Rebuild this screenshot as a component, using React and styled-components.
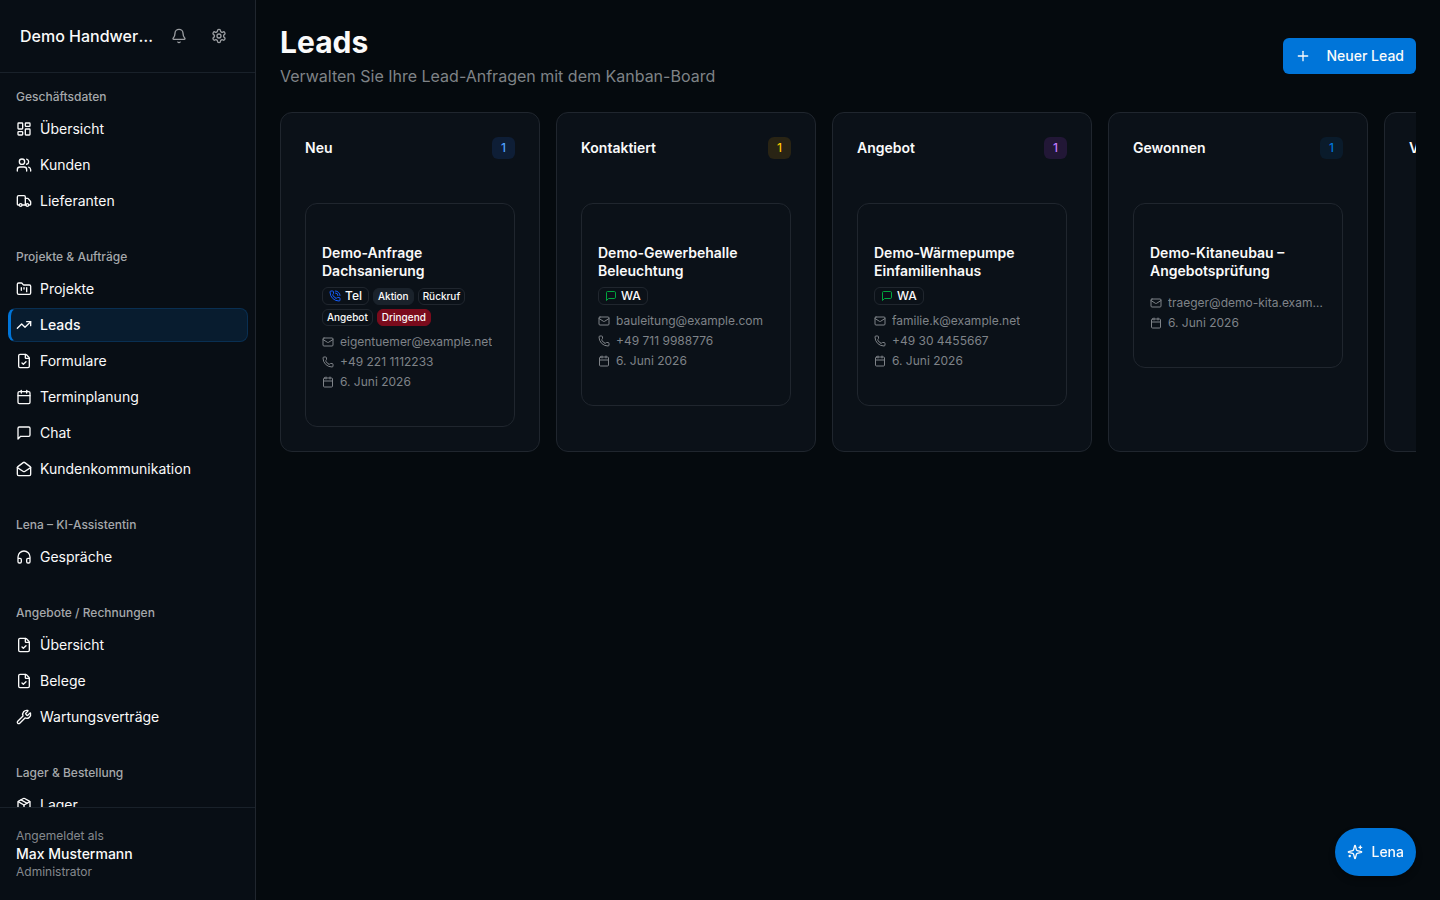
import React from 'react'
import styled, { createGlobalStyle } from 'styled-components'
import {
  LayoutDashboard, Users, Truck, FolderKanban, TrendingUp, FileCheck, Calendar,
  MailOpen, Headphones, Wrench, Package, Bell, Plus, Mail, Phone, PhoneCall
} from 'lucide-react'

const LineIcon = ({ size = 16, children }) => (
  <svg width={size} height={size} viewBox="0 0 24 24" fill="none" stroke="currentColor"
    strokeWidth="2" strokeLinecap="round" strokeLinejoin="round" aria-hidden="true">
    {children}
  </svg>
)

const ChatIcon = ({ size }) => (
  <LineIcon size={size}>
    <path d="M21 15a2 2 0 0 1-2 2H7l-4 4V5a2 2 0 0 1 2-2h14a2 2 0 0 1 2 2z" />
  </LineIcon>
)

const GearIcon = ({ size }) => (
  <LineIcon size={size}>
    <path d="M12.22 2h-.44a2 2 0 0 0-2 2v.18a2 2 0 0 1-1 1.73l-.43.25a2 2 0 0 1-2 0l-.15-.08a2 2 0 0 0-2.73.73l-.22.38a2 2 0 0 0 .73 2.73l.15.1a2 2 0 0 1 1 1.72v.51a2 2 0 0 1-1 1.74l-.15.09a2 2 0 0 0-.73 2.73l.22.38a2 2 0 0 0 2.73.73l.15-.08a2 2 0 0 1 2 0l.43.25a2 2 0 0 1 1 1.73V20a2 2 0 0 0 2 2h.44a2 2 0 0 0 2-2v-.18a2 2 0 0 1 1-1.73l.43-.25a2 2 0 0 1 2 0l.15.08a2 2 0 0 0 2.73-.73l.22-.39a2 2 0 0 0-.73-2.73l-.15-.08a2 2 0 0 1-1-1.74v-.5a2 2 0 0 1 1-1.74l.15-.09a2 2 0 0 0 .73-2.73l-.22-.38a2 2 0 0 0-2.73-.73l-.15.08a2 2 0 0 1-2 0l-.43-.25a2 2 0 0 1-1-1.73V4a2 2 0 0 0-2-2z" />
    <circle cx="12" cy="12" r="3" />
  </LineIcon>
)

const SparklesIcon = ({ size }) => (
  <LineIcon size={size}>
    <path d="M9.937 15.5A2 2 0 0 0 8.5 14.063l-6.135-1.582a.5.5 0 0 1 0-.962L8.5 9.936A2 2 0 0 0 9.937 8.5l1.582-6.135a.5.5 0 0 1 .963 0L14.063 8.5A2 2 0 0 0 15.5 9.937l6.135 1.581a.5.5 0 0 1 0 .964L15.5 14.063a2 2 0 0 0-1.437 1.437l-1.582 6.135a.5.5 0 0 1-.963 0z" />
    <path d="M20 3v4" />
    <path d="M22 5h-4" />
    <path d="M4 17v2" />
    <path d="M5 18H3" />
  </LineIcon>
)

const navGroups = [
  {
    label: 'Geschäftsdaten',
    items: [
      { name: 'Übersicht', icon: LayoutDashboard },
      { name: 'Kunden', icon: Users },
      { name: 'Lieferanten', icon: Truck },
    ],
  },
  {
    label: 'Projekte & Aufträge',
    items: [
      { name: 'Projekte', icon: FolderKanban },
      { name: 'Leads', icon: TrendingUp, active: true },
      { name: 'Formulare', icon: FileCheck },
      { name: 'Terminplanung', icon: Calendar },
      { name: 'Chat', icon: ChatIcon },
      { name: 'Kundenkommunikation', icon: MailOpen },
    ],
  },
  {
    label: 'Lena – KI-Assistentin',
    items: [{ name: 'Gespräche', icon: Headphones }],
  },
  {
    label: 'Angebote / Rechnungen',
    items: [
      { name: 'Übersicht', icon: FileCheck },
      { name: 'Belege', icon: FileCheck },
      { name: 'Wartungsverträge', icon: Wrench },
    ],
  },
  {
    label: 'Lager & Bestellung',
    items: [{ name: 'Lager', icon: Package }],
  },
]

const columns = [
  {
    title: 'Neu', color: '#51a2ff', bg: '#0e1e36',
    leads: [{
      title: 'Demo-Anfrage Dachsanierung',
      channel: 'Tel',
      tags: [
        { text: 'Aktion', kind: 'muted' },
        { text: 'Rückruf' },
        { text: 'Angebot' },
        { text: 'Dringend', kind: 'urgent' },
      ],
      email: 'eigentuemer@example.net',
      phone: '+49 221 1112233',
      date: '6. Juni 2026',
    }],
  },
  {
    title: 'Kontaktiert', color: '#fdc700', bg: '#292414',
    leads: [{
      title: 'Demo-Gewerbehalle Beleuchtung',
      channel: 'WA',
      email: 'bauleitung@example.com',
      phone: '+49 711 9988776',
      date: '6. Juni 2026',
    }],
  },
  {
    title: 'Angebot', color: '#c27aff', bg: '#221736',
    leads: [{
      title: 'Demo-Wärmepumpe Einfamilienhaus',
      channel: 'WA',
      email: 'familie.k@example.net',
      phone: '+49 30 4455667',
      date: '6. Juni 2026',
    }],
  },
  {
    title: 'Gewonnen', color: '#0075d9', bg: '#0a1b2b',
    leads: [{
      title: 'Demo-Kitaneubau – Angebotsprüfung',
      email: 'traeger@demo-kita.example.com',
      date: '6. Juni 2026',
    }],
  },
  { title: 'Verloren', color: '#ff6467', bg: '#2a1519', leads: [] },
]

function LeadCard({ lead }) {
  return (
    <Card>
      <CardTitle>{lead.title}</CardTitle>
      <Tags>
        {lead.channel && (
          <Channel $kind={lead.channel}>
            {lead.channel === 'Tel' ? <PhoneCall size={12} /> : <ChatIcon size={12} />}
            {lead.channel}
          </Channel>
        )}
        {lead.tags?.map((t) => <Tag key={t.text} $kind={t.kind}>{t.text}</Tag>)}
      </Tags>
      <Details>
        <Detail><Mail size={12} /><span>{lead.email}</span></Detail>
        {lead.phone && <Detail><Phone size={12} /><span>{lead.phone}</span></Detail>}
        <Detail><Calendar size={12} /><span>{lead.date}</span></Detail>
      </Details>
    </Card>
  )
}

function App() {
  return (
    <>
      <GlobalStyle />
      <Layout>
        <Sidebar>
          <SidebarHeader>
            <Company>Demo Handwerksbetrieb</Company>
            <IconButton aria-label="Benachrichtigungen"><Bell size={16} /></IconButton>
            <IconButton aria-label="Einstellungen"><GearIcon size={16} /></IconButton>
          </SidebarHeader>
          <Nav>
            {navGroups.map((group) => (
              <NavGroup key={group.label}>
                <NavLabel>{group.label}</NavLabel>
                <NavList>
                  {group.items.map(({ name, icon: Icon, active }) => (
                    <li key={name}>
                      <NavLink href="#" $active={active} aria-current={active ? 'page' : undefined}>
                        <Icon size={16} />
                        {name}
                      </NavLink>
                    </li>
                  ))}
                </NavList>
              </NavGroup>
            ))}
          </Nav>
          <UserBox>
            <UserMeta>Angemeldet als</UserMeta>
            <UserName>Max Mustermann</UserName>
            <UserMeta>Administrator</UserMeta>
          </UserBox>
        </Sidebar>
        <Main>
          <PageHeader>
            <div>
              <PageTitle>Leads</PageTitle>
              <Subtitle>Verwalten Sie Ihre Lead-Anfragen mit dem Kanban-Board</Subtitle>
            </div>
            <NewLead><Plus size={16} />Neuer Lead</NewLead>
          </PageHeader>
          <Board>
            {columns.map((col) => (
              <Column key={col.title}>
                <ColumnHeader>
                  <ColumnTitle>{col.title}</ColumnTitle>
                  <Count $color={col.color} $bg={col.bg}>{col.leads.length}</Count>
                </ColumnHeader>
                {col.leads.map((lead) => <LeadCard key={lead.title} lead={lead} />)}
              </Column>
            ))}
          </Board>
        </Main>
        <Assistant><SparklesIcon size={16} />Lena</Assistant>
      </Layout>
    </>
  )
}

const GlobalStyle = createGlobalStyle`
*{
    box-sizing: border-box;
}
body{
    margin: 0;
    background: #050a0e;
    color: #fafafa;
    font-family: Inter, "Liberation Sans", sans-serif;
    font-size: 14px;
    line-height: 20px;
    -webkit-font-smoothing: antialiased;
}
h1,h2,h3,p,ul{
    margin: 0;
    padding: 0;
}
button{
    font: inherit;
    border: 0;
    cursor: pointer;
}
svg{
    flex-shrink: 0;
}
`

const Layout = styled.div`
display: flex;
height: 100vh;
overflow: hidden;
`

const Sidebar = styled.aside`
display: flex;
flex-direction: column;
width: 256px;
flex-shrink: 0;
background: #080e15;
border-right: 1px solid #20262e;
`

const SidebarHeader = styled.header`
display: flex;
align-items: center;
gap: 8px;
height: 73px;
flex-shrink: 0;
padding: 0 20px;
border-bottom: 1px solid #19212a;
`

const Company = styled.div`
flex: 1;
min-width: 0;
font-size: 16px;
font-weight: 500;
line-height: 24px;
overflow: hidden;
text-overflow: ellipsis;
white-space: nowrap;
`

const IconButton = styled.button`
display: flex;
align-items: center;
justify-content: center;
width: 32px;
height: 32px;
padding: 0;
background: transparent;
color: #9a9da1;
`

const Nav = styled.nav`
flex: 1;
min-height: 0;
overflow: hidden;
display: flex;
flex-direction: column;
gap: 23px;
padding: 8px 7px 0 8px;
`

const NavGroup = styled.section`
flex-shrink: 0;
`

const NavLabel = styled.h3`
padding: 8px 8px 7px;
font-size: 12px;
font-weight: 500;
line-height: 16px;
color: #a5a8ab;
`

const NavList = styled.ul`
display: flex;
flex-direction: column;
gap: 2px;
list-style: none;
`

const NavLink = styled.a`
display: flex;
align-items: center;
gap: 8px;
height: 34px;
padding: 0 8px;
border-radius: 8px;
color: #fafafa;
text-decoration: none;
${({ $active }) => $active && `
    padding: 0 7px 0 5px;
    background: #081c2f;
    border: 1px solid #092f52;
    border-left: 3px solid #0075d9;
    font-weight: 500;
`}
`

const UserBox = styled.footer`
flex-shrink: 0;
padding: 20px 16px;
border-top: 1px solid #19212a;
`

const UserMeta = styled.p`
font-size: 12px;
line-height: 16px;
color: #85898e;
`

const UserName = styled.p`
font-weight: 500;
`

const Main = styled.main`
flex: 1;
min-width: 0;
padding: 24px;
`

const PageHeader = styled.header`
display: flex;
align-items: center;
justify-content: space-between;
margin-bottom: 24px;
`

const PageTitle = styled.h1`
font-size: 30px;
font-weight: 700;
line-height: 36px;
margin-bottom: 4px;
`

const Subtitle = styled.p`
font-size: 16px;
line-height: 24px;
color: #7f8387;
`

const NewLead = styled.button`
display: flex;
align-items: center;
gap: 16px;
height: 36px;
padding: 0 12px;
border-radius: 6px;
background: #0075d9;
color: #fafafa;
font-weight: 500;
`

const Board = styled.div`
display: flex;
gap: 16px;
overflow: hidden;
`

const Column = styled.section`
width: 260px;
flex-shrink: 0;
padding: 24px;
background: #0b1118;
border: 1px solid #20262e;
border-radius: 12px;
`

const ColumnHeader = styled.header`
display: flex;
align-items: center;
justify-content: space-between;
margin-bottom: 44px;
`

const ColumnTitle = styled.h2`
font-size: 14px;
font-weight: 600;
line-height: 20px;
`

const Count = styled.span`
padding: 3px 9px;
border-radius: 6px;
font-size: 12px;
font-weight: 500;
line-height: 16px;
color: ${({ $color }) => $color};
background: ${({ $bg }) => $bg};
`

const Card = styled.article`
padding: 40px 16px 36px;
background: #0b1118;
border: 1px solid #20262e;
border-radius: 12px;
`

const CardTitle = styled.h3`
font-size: 14px;
font-weight: 600;
line-height: 18px;
`

const Tags = styled.div`
display: flex;
flex-wrap: wrap;
align-items: flex-end;
gap: 4px;
margin: 7px 0 8px;
`

const Tag = styled.span`
padding: 0 4px;
border: 1px solid #20262e;
border-radius: 6px;
font-size: 10px;
font-weight: 500;
line-height: 15px;
${({ $kind }) => $kind === 'muted' && `
    background: #1a222b;
    border-color: #1a222b;
`}
${({ $kind }) => $kind === 'urgent' && `
    background: #7a0b1c;
    border-color: #7a0b1c;
`}
`

const Channel = styled.span`
display: flex;
align-items: center;
gap: 4px;
padding: 0 6px;
border: 1px solid #20262e;
border-radius: 6px;
font-size: 12px;
font-weight: 500;
line-height: 16px;
svg{
    color: ${({ $kind }) => ($kind === 'Tel' ? '#155dfc' : '#00a63e')};
}
`

const Details = styled.div`
display: flex;
flex-direction: column;
gap: 4px;
`

const Detail = styled.div`
display: flex;
align-items: center;
gap: 6px;
font-size: 12px;
line-height: 16px;
color: #7f8388;
span{
    overflow: hidden;
    text-overflow: ellipsis;
    white-space: nowrap;
}
`

// floats above the page
const Assistant = styled.button`
position: fixed;
right: 24px;
bottom: 24px;
display: flex;
align-items: center;
gap: 8px;
height: 48px;
padding: 0 12px;
border-radius: 24px;
background: #0075d9;
color: #fafafa;
font-weight: 500;
box-shadow: 0 4px 6px rgba(0, 0, 0, 0.3);
`

export default App
